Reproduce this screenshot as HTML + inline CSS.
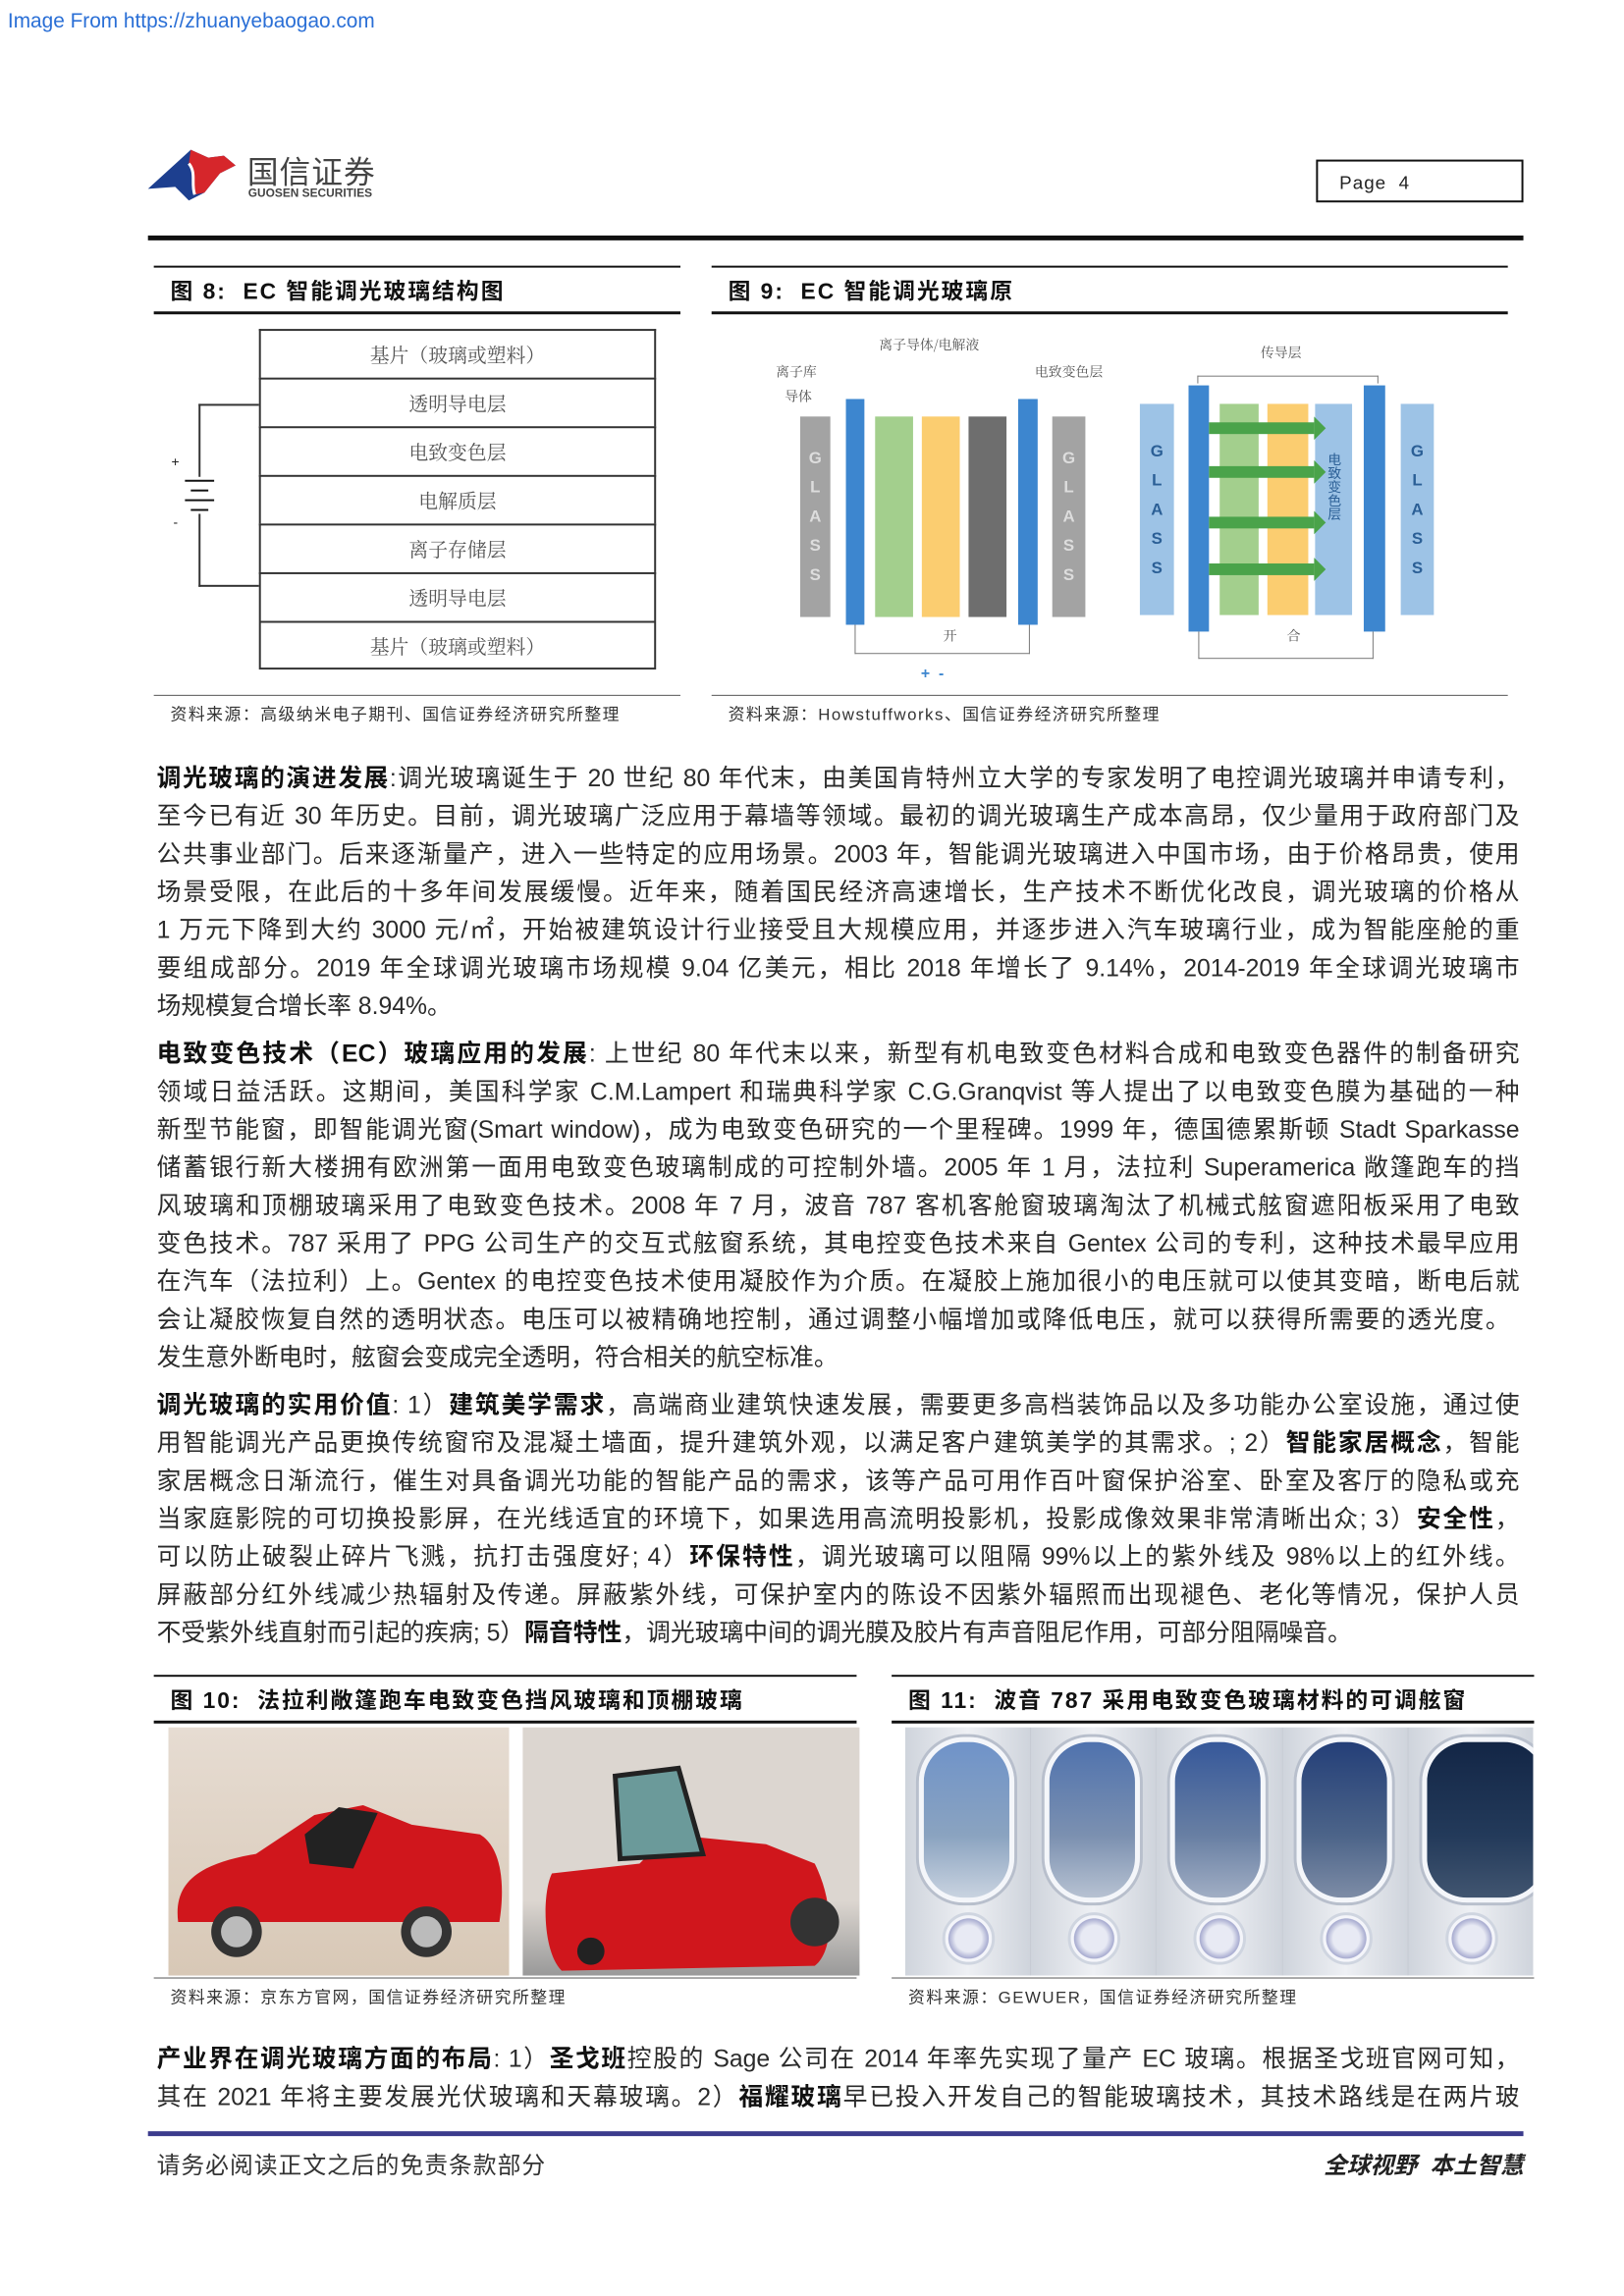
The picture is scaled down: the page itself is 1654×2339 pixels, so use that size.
<!DOCTYPE html>
<html><head><meta charset="utf-8"><style>
*{margin:0;padding:0;box-sizing:border-box}
body{width:1654px;height:2339px;background:#fff;position:relative;overflow:hidden;font-family:"Liberation Sans","Noto Sans CJK SC",sans-serif;color:#222}
#w{position:absolute;left:0;top:0;width:1668px;height:2359px;transform:scale(0.9914);transform-origin:0 0}
.a{position:absolute}
.ln{position:absolute;left:161px;width:1400px;font-size:25px;line-height:39px;height:39px;white-space:nowrap;text-align:justify;text-align-last:justify;color:#2a2a2a}
.nj{text-align-last:left}
b{font-weight:bold;color:#111}
.hr{position:absolute;background:#111}
.ft{font-size:23px;font-weight:bold;color:#111;letter-spacing:2px}
.src{font-size:17px;color:#333;letter-spacing:1.5px}
.row{position:absolute;left:266px;width:408px;height:50px;border:2px solid #333;border-bottom:none;font-size:20px;color:#555;text-align:center;line-height:48px;font-family:"Noto Serif CJK SC",serif}
.bar{position:absolute}
.gl{color:#fff;font-size:17px;text-align:center;line-height:30px;display:flex;flex-direction:column;justify-content:center;font-weight:bold}
.lab{position:absolute;font-size:14px;color:#555;font-family:"Noto Serif CJK SC",serif}
.arr{position:absolute;height:12px;background:#4aa34a}
.arr:after{content:"";position:absolute;right:-12px;top:-6px;border-left:12px solid #4aa34a;border-top:12px solid transparent;border-bottom:12px solid transparent}
.win{flex:1;position:relative;border-right:1px solid #c4c8d0;background:linear-gradient(90deg,#cfd4dc,#eef0f4 50%,#cfd4dc)}
.win i{position:absolute;left:14px;top:10px;width:98px;height:170px;border-radius:46px;border:5px solid #f4f6fa;box-shadow:0 0 0 3px #b8bfcc}
.win s{position:absolute;left:38px;top:190px;width:54px;height:54px;border-radius:50%;background:radial-gradient(#e8eaf4 40%,#a8acd0 60%,#f4f5fa 62%);border:3px solid #cfd5e0}
</style></head><body><div id="w">
<div class="a" style="left:8px;top:10px;font-size:21px;color:#2a6fd6">Image From https://zhuanyebaogao.com</div>

<!-- logo -->
<svg class="a" style="left:150px;top:148px" width="100" height="62" viewBox="0 0 100 62">
<path d="M46 6 L64 14 L80 12 L92 22 L76 30 L60 50 L44 58 L30 44 L2 46 Z" fill="#1d3f8f"/>
<path d="M46 6 L64 14 L80 12 L92 22 L76 30 L60 50 L50 52 C46 40 52 30 44 20 Z" fill="#d6262b"/>
<path d="M44 20 C52 30 46 40 50 52" stroke="#fff" stroke-width="3" fill="none"/>
</svg>
<div class="a" style="left:254px;top:152px;font-size:32px;color:#444;letter-spacing:1px">国信证券</div>
<div class="a" style="left:255px;top:191px;font-size:12px;font-weight:bold;color:#444">GUOSEN SECURITIES</div>
<div class="a" style="left:1352px;top:164px;width:213px;height:44px;border:2px solid #111;font-size:19px;padding:12px 0 0 22px;letter-spacing:1px">Page&nbsp;&nbsp;4</div>
<div class="hr" style="left:152px;top:242px;width:1413px;height:5px"></div>

<!-- Fig 8 -->
<div class="hr" style="left:158px;top:273px;width:541px;height:2px"></div>
<div class="a ft" style="left:175px;top:280px">图 8:&nbsp; EC 智能调光玻璃结构图</div>
<div class="hr" style="left:158px;top:320px;width:541px;height:3px"></div>
<div class="row" style="top:338px">基片（玻璃或塑料）</div>
<div class="row" style="top:388px">透明导电层</div>
<div class="row" style="top:438px">电致变色层</div>
<div class="row" style="top:488px">电解质层</div>
<div class="row" style="top:538px">离子存储层</div>
<div class="row" style="top:588px">透明导电层</div>
<div class="row" style="top:638px;border-bottom:2px solid #333">基片（玻璃或塑料）</div>
<div class="a" style="left:204px;top:415px;width:62px;height:188px;border:2px solid #333;border-right:none"></div>
<div class="a" style="left:190px;top:490px;width:34px;height:38px;background:#fff"></div>
<div class="hr" style="left:190px;top:493px;width:30px;height:2px"></div>
<div class="hr" style="left:196px;top:503px;width:18px;height:2px"></div>
<div class="hr" style="left:190px;top:513px;width:30px;height:2px"></div>
<div class="hr" style="left:196px;top:523px;width:18px;height:2px"></div>
<div class="a" style="left:176px;top:466px;font-size:14px">+</div>
<div class="a" style="left:178px;top:528px;font-size:14px">-</div>
<div class="hr" style="left:158px;top:714px;width:541px;height:1px;background:#555"></div>
<div class="a src" style="left:175px;top:720px">资料来源：高级纳米电子期刊、国信证券经济研究所整理</div>

<!-- Fig 9 -->
<div class="hr" style="left:731px;top:273px;width:818px;height:2px"></div>
<div class="a ft" style="left:748px;top:280px">图 9:&nbsp; EC 智能调光玻璃原</div>
<div class="hr" style="left:731px;top:320px;width:818px;height:3px"></div>
<div class="bar gl" style="left:822px;top:428px;width:31px;height:206px;background:#a3a3a3;color:#ddd"><span>G</span><span>L</span><span>A</span><span>S</span><span>S</span></div>
<div class="bar" style="left:869px;top:410px;width:19px;height:232px;background:#3d86cf"></div>
<div class="bar" style="left:899px;top:428px;width:39px;height:206px;background:#a3cf8d"></div>
<div class="bar" style="left:947px;top:428px;width:39px;height:206px;background:#fbcd70"></div>
<div class="bar" style="left:995px;top:428px;width:39px;height:206px;background:#6e6e6e"></div>
<div class="bar" style="left:1046px;top:410px;width:20px;height:232px;background:#3d86cf"></div>
<div class="bar gl" style="left:1081px;top:428px;width:34px;height:206px;background:#a3a3a3;color:#ddd"><span>G</span><span>L</span><span>A</span><span>S</span><span>S</span></div>
<div class="bar gl" style="left:1171px;top:415px;width:35px;height:217px;background:#9dc3e6;color:#2b5f96"><span>G</span><span>L</span><span>A</span><span>S</span><span>S</span></div>
<div class="bar" style="left:1221px;top:396px;width:21px;height:253px;background:#3d86cf"></div>
<div class="bar" style="left:1253px;top:415px;width:40px;height:217px;background:#a3cf8d"></div>
<div class="bar" style="left:1302px;top:415px;width:42px;height:217px;background:#fbcd70"></div>
<div class="bar" style="left:1351px;top:415px;width:38px;height:217px;background:#9dc3e6;font-size:14px;color:#2b5f96;writing-mode:vertical-rl;padding-top:50px;padding-right:8px">电致变色层</div>
<div class="bar" style="left:1401px;top:396px;width:22px;height:253px;background:#3d86cf"></div>
<div class="bar gl" style="left:1439px;top:415px;width:34px;height:217px;background:#9dc3e6;color:#2b5f96"><span>G</span><span>L</span><span>A</span><span>S</span><span>S</span></div>
<div class="arr" style="left:1242px;top:434px;width:108px"></div>
<div class="arr" style="left:1242px;top:479px;width:108px"></div>
<div class="arr" style="left:1242px;top:531px;width:108px"></div>
<div class="arr" style="left:1242px;top:579px;width:108px"></div>
<div class="lab" style="left:903px;top:344px">离子导体/电解液</div>
<div class="lab" style="left:797px;top:372px">离子库</div>
<div class="lab" style="left:806px;top:397px">导体</div>
<div class="lab" style="left:1063px;top:372px">电致变色层</div>
<div class="lab" style="left:1295px;top:352px">传导层</div>
<div class="lab" style="left:969px;top:643px">开</div>
<div class="lab" style="left:1322px;top:643px">合</div>
<div class="a" style="left:1230px;top:386px;width:186px;height:8px;border:1px solid #777;border-bottom:none"></div>
<div class="a" style="left:878px;top:642px;width:180px;height:30px;border:1px solid #777;border-top:none"></div>
<div class="a" style="left:1231px;top:649px;width:180px;height:28px;border:1px solid #777;border-top:none"></div>
<div class="a" style="left:946px;top:684px;font-size:16px;color:#3d86cf;font-weight:bold">+&nbsp;&nbsp;-</div>
<div class="hr" style="left:731px;top:714px;width:818px;height:1px;background:#555"></div>
<div class="a src" style="left:748px;top:720px">资料来源：Howstuffworks、国信证券经济研究所整理</div>

<!-- P1 -->
<div class="ln" style="top:781px"><b>调光玻璃的演进发展</b>:调光玻璃诞生于 20 世纪 80 年代末，由美国肯特州立大学的专家发明了电控调光玻璃并申请专利，</div>
<div class="ln" style="top:820px">至今已有近 30 年历史。目前，调光玻璃广泛应用于幕墙等领域。最初的调光玻璃生产成本高昂，仅少量用于政府部门及</div>
<div class="ln" style="top:859px">公共事业部门。后来逐渐量产，进入一些特定的应用场景。2003 年，智能调光玻璃进入中国市场，由于价格昂贵，使用</div>
<div class="ln" style="top:898px">场景受限，在此后的十多年间发展缓慢。近年来，随着国民经济高速增长，生产技术不断优化改良，调光玻璃的价格从</div>
<div class="ln" style="top:937px">1 万元下降到大约 3000 元/㎡，开始被建筑设计行业接受且大规模应用，并逐步进入汽车玻璃行业，成为智能座舱的重</div>
<div class="ln" style="top:976px">要组成部分。2019 年全球调光玻璃市场规模 9.04 亿美元，相比 2018 年增长了 9.14%，2014-2019 年全球调光玻璃市</div>
<div class="ln nj" style="top:1015px">场规模复合增长率 8.94%。</div>
<!-- P2 -->
<div class="ln" style="top:1064px"><b>电致变色技术（EC）玻璃应用的发展</b>: 上世纪 80 年代末以来，新型有机电致变色材料合成和电致变色器件的制备研究</div>
<div class="ln" style="top:1103px">领域日益活跃。这期间，美国科学家 C.M.Lampert 和瑞典科学家 C.G.Granqvist 等人提出了以电致变色膜为基础的一种</div>
<div class="ln" style="top:1142px">新型节能窗，即智能调光窗(Smart window)，成为电致变色研究的一个里程碑。1999 年，德国德累斯顿 Stadt Sparkasse</div>
<div class="ln" style="top:1181px">储蓄银行新大楼拥有欧洲第一面用电致变色玻璃制成的可控制外墙。2005 年 1 月，法拉利 Superamerica 敞篷跑车的挡</div>
<div class="ln" style="top:1220px">风玻璃和顶棚玻璃采用了电致变色技术。2008 年 7 月，波音 787 客机客舱窗玻璃淘汰了机械式舷窗遮阳板采用了电致</div>
<div class="ln" style="top:1259px">变色技术。787 采用了 PPG 公司生产的交互式舷窗系统，其电控变色技术来自 Gentex 公司的专利，这种技术最早应用</div>
<div class="ln" style="top:1298px">在汽车（法拉利）上。Gentex 的电控变色技术使用凝胶作为介质。在凝胶上施加很小的电压就可以使其变暗，断电后就</div>
<div class="ln" style="top:1337px;width:1390px">会让凝胶恢复自然的透明状态。电压可以被精确地控制，通过调整小幅增加或降低电压，就可以获得所需要的透光度。</div>
<div class="ln nj" style="top:1376px">发生意外断电时，舷窗会变成完全透明，符合相关的航空标准。</div>
<!-- P3 -->
<div class="ln" style="top:1425px"><b>调光玻璃的实用价值</b>: 1）<b>建筑美学需求</b>，高端商业建筑快速发展，需要更多高档装饰品以及多功能办公室设施，通过使</div>
<div class="ln" style="top:1464px">用智能调光产品更换传统窗帘及混凝土墙面，提升建筑外观，以满足客户建筑美学的其需求。; 2）<b>智能家居概念</b>，智能</div>
<div class="ln" style="top:1503px">家居概念日渐流行，催生对具备调光功能的智能产品的需求，该等产品可用作百叶窗保护浴室、卧室及客厅的隐私或充</div>
<div class="ln" style="top:1542px">当家庭影院的可切换投影屏，在光线适宜的环境下，如果选用高流明投影机，投影成像效果非常清晰出众; 3）<b>安全性</b>，</div>
<div class="ln" style="top:1581px">可以防止破裂止碎片飞溅，抗打击强度好; 4）<b>环保特性</b>，调光玻璃可以阻隔 99%以上的紫外线及 98%以上的红外线。</div>
<div class="ln" style="top:1620px">屏蔽部分红外线减少热辐射及传递。屏蔽紫外线，可保护室内的陈设不因紫外辐照而出现褪色、老化等情况，保护人员</div>
<div class="ln nj" style="top:1659px">不受紫外线直射而引起的疾病; 5）<b>隔音特性</b>，调光玻璃中间的调光膜及胶片有声音阻尼作用，可部分阻隔噪音。</div>

<!-- Fig 10 -->
<div class="hr" style="left:158px;top:1721px;width:722px;height:2px"></div>
<div class="a ft" style="left:175px;top:1728px">图 10:&nbsp; 法拉利敞篷跑车电致变色挡风玻璃和顶棚玻璃</div>
<div class="hr" style="left:158px;top:1768px;width:722px;height:3px"></div>
<div class="a" style="left:173px;top:1775px;width:350px;height:255px;background:linear-gradient(#e6dcd2,#d8c8b6)"></div>
<svg class="a" style="left:173px;top:1775px" width="350" height="255"><path d="M10 200 C5 160 30 140 90 130 L150 90 L200 80 L250 100 L320 110 C345 125 345 170 340 200 Z" fill="#d0161c"/><path d="M140 110 L175 82 L215 88 L190 145 L145 140 Z" fill="#222"/><circle cx="70" cy="210" r="26" fill="#333"/><circle cx="70" cy="210" r="16" fill="#bbb"/><circle cx="265" cy="210" r="26" fill="#333"/><circle cx="265" cy="210" r="16" fill="#bbb"/></svg>
<div class="a" style="left:537px;top:1775px;width:346px;height:255px;background:linear-gradient(#dcd6d0 70%,#999 100%)"></div>
<svg class="a" style="left:537px;top:1775px" width="346" height="255"><path d="M30 150 L120 140 L150 110 L250 120 L300 140 C320 180 320 230 300 245 L40 250 C20 230 20 170 30 150 Z" fill="#d0161c"/><path d="M95 50 L160 42 L185 130 L100 135 Z" fill="#6b9a9a" stroke="#222" stroke-width="5"/><circle cx="300" cy="200" r="25" fill="#333"/><circle cx="70" cy="230" r="14" fill="#222"/></svg>
<div class="hr" style="left:158px;top:2032px;width:722px;height:1px;background:#555"></div>
<div class="a src" style="left:175px;top:2038px">资料来源：京东方官网，国信证券经济研究所整理</div>

<!-- Fig 11 -->
<div class="hr" style="left:916px;top:1721px;width:660px;height:2px"></div>
<div class="a ft" style="left:933px;top:1728px">图 11:&nbsp; 波音 787 采用电致变色玻璃材料的可调舷窗</div>
<div class="hr" style="left:916px;top:1768px;width:660px;height:3px"></div>
<div class="a" style="left:930px;top:1775px;width:645px;height:255px;background:#dfe3ea;display:flex;overflow:hidden">
<div class="win"><i style="background:linear-gradient(#6f93c9,#8aa3c0 60%,#c9d3e0)"></i><s></s></div>
<div class="win"><i style="background:linear-gradient(#4f72ae,#7b90b0 60%,#b7c2d2)"></i><s></s></div>
<div class="win"><i style="background:linear-gradient(#36589a,#687fa3 60%,#a1aec4)"></i><s></s></div>
<div class="win"><i style="background:linear-gradient(#243f78,#4c6489 60%,#7d8ca6)"></i><s></s></div>
<div class="win" style="border-right:none"><i style="width:130px;background:linear-gradient(#132646,#233a5a 60%,#415570)"></i><s></s></div>
</div>
<div class="hr" style="left:916px;top:2032px;width:660px;height:1px;background:#555"></div>
<div class="a src" style="left:933px;top:2038px">资料来源：GEWUER，国信证券经济研究所整理</div>

<!-- last -->
<div class="ln" style="top:2097px"><b>产业界在调光玻璃方面的布局</b>: 1）<b>圣戈班</b>控股的 Sage 公司在 2014 年率先实现了量产 EC 玻璃。根据圣戈班官网可知，</div>
<div class="ln" style="top:2136px">其在 2021 年将主要发展光伏玻璃和天幕玻璃。2）<b>福耀玻璃</b>早已投入开发自己的智能玻璃技术，其技术路线是在两片玻</div>
<div class="hr" style="left:152px;top:2190px;width:1413px;height:5px;background:#3b3b8c"></div>
<div class="a" style="left:161px;top:2205px;font-size:24px;color:#333;letter-spacing:1px">请务必阅读正文之后的免责条款部分</div>
<div class="a" style="left:1330px;top:2205px;width:235px;text-align:right;font-size:24px;font-weight:bold;font-style:italic;color:#222">全球视野&nbsp; 本土智慧</div>
</div></body></html>
